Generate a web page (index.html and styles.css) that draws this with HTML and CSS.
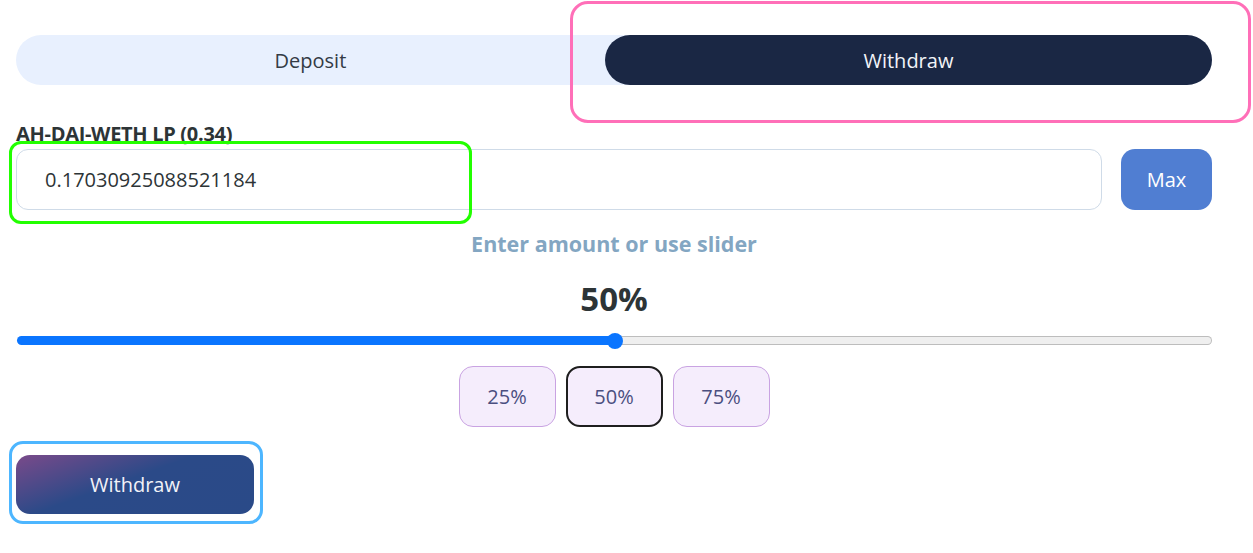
FILE: index.html
```html
<!DOCTYPE html>
<html>
<head>
<meta charset="utf-8">
<link rel="stylesheet" href="styles.css">
</head>
<body>
<div class="page">
  <div class="tabs">
    <div class="tab">Deposit</div>
    <div class="tab active">Withdraw</div>
  </div>
  <div class="label">AH-DAI-WETH LP (0.34)</div>
  <div class="input-row">
    <div class="input">0.17030925088521184</div>
    <div class="max">Max</div>
  </div>
  <div class="hint">Enter amount or use slider</div>
  <div class="pct">50%</div>
  <div class="slider">
    <div class="fill" style="width:50%"></div>
    <div class="rest"></div>
    <div class="thumb" style="left:50%"></div>
  </div>
  <div class="presets">
    <div class="preset">25%</div>
    <div class="preset selected">50%</div>
    <div class="preset">75%</div>
  </div>
  <div class="submit-row">
    <div class="submit">Withdraw</div>
  </div>
  <div class="mark mark-pink"></div>
  <div class="mark mark-green"></div>
  <div class="mark mark-blue"></div>
</div>
</body>
</html>
```
FILE: styles.css
```css
* { box-sizing: border-box; }
html, body { margin: 0; padding: 0; background: #fff; }
body { font-family: "Open Sans", "Noto Sans", sans-serif; color: #2d3436; }
.page { position: relative; width: 1253px; height: 553px; padding: 35px 41px 0 16px; display: flex; flex-direction: column; }
.tabs { display: flex; height: 50px; background: #e8f0fe; border-radius: 25px; }
.tab { flex: 1 1 auto; display: flex; align-items: center; justify-content: center; font-size: 20px; color: #333b45; border-radius: 25px; }
.tab.active { background: #1a2744; color: #f2f4f8; }
.label { margin-top: 38px; font-size: 20px; font-weight: 700; color: #2d3436; line-height: 22px; letter-spacing: -0.3px; }
.input-row { display: flex; gap: 19px; margin-top: 4px; height: 61px; }
.input { flex: 1; border: 1px solid #cfdbe8; border-radius: 12px; display: flex; align-items: center; padding-left: 28px; font-size: 20px; color: #2d3436; }
.max { width: 91px; background: #507ed2; border-radius: 14px; color: #fff; font-size: 20px; display: flex; align-items: center; justify-content: center; }
.hint { margin-top: 20px; text-align: center; font-size: 21.5px; font-weight: 700; color: #83a6c2; line-height: 28px; }
.pct { margin-top: 21px; text-align: center; font-size: 33px; font-weight: 700; color: #2d3436; line-height: 40px; }
.slider { position: relative; margin-top: 17px; margin-left: 1px; height: 9px; display: flex; }
.fill { height: 9px; background: #0a75ff; border-radius: 5px 0 0 5px; }
.rest { flex: 1; height: 9px; background: #efefef; border: 1px solid #bdbdbd; border-left: none; border-radius: 0 5px 5px 0; }
.thumb { position: absolute; top: -3px; width: 16px; height: 16px; margin-left: -8px; border-radius: 50%; background: #0a75ff; }
.presets { display: flex; justify-content: center; gap: 10px; margin-top: 21px; }
.preset { width: 97px; height: 61px; background: #f5edfc; border: 1px solid #c9a3e2; border-radius: 14px; display: flex; align-items: center; justify-content: center; font-size: 20px; color: #4b4f80; }
.preset.selected { border: 2px solid #1e1e1e; }
.submit-row { display: flex; margin-top: 28px; }
.submit { width: 238px; height: 59px; border-radius: 14px; background: linear-gradient(160deg, #7a4a8a 0%, #2b4a88 45%, #2a4a88 100%); color: #f2f2f8; font-size: 20px; display: flex; align-items: center; justify-content: center; }
.mark { position: absolute; border-style: solid; border-width: 3px; }
.mark-pink { left: 570px; top: 1px; width: 681px; height: 122px; border-color: #ff6fb8; border-radius: 18px; }
.mark-green { left: 9px; top: 141px; width: 463px; height: 83px; border-color: #22ff00; border-radius: 12px; }
.mark-blue { left: 9px; top: 441px; width: 254px; height: 83px; border-color: #4db6ff; border-radius: 14px; }
```
